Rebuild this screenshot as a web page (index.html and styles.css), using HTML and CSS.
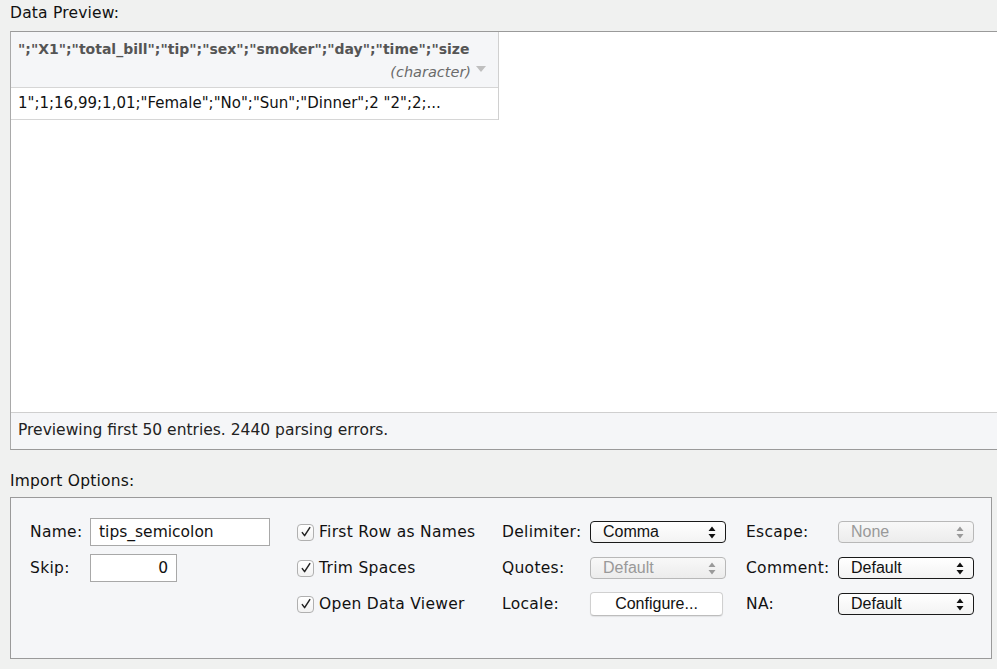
FILE: index.html
```html
<!DOCTYPE html>
<html>
<head>
<meta charset="utf-8">
<link rel="stylesheet" href="styles.css">
</head>
<body>
<div class="page">
  <div class="section-title top">Data Preview:</div>
  <div class="preview">
    <div class="grid-area">
      <div class="table">
        <div class="thead">
          <div class="col-name">";"X1";"total_bill";"tip";"sex";"smoker";"day";"time";"size</div>
          <div class="col-type"><span>(character)</span><span class="caret"></span></div>
        </div>
        <div class="trow">1";1;16,99;1,01;"Female";"No";"Sun";"Dinner";2 "2";2;...</div>
      </div>
    </div>
    <div class="status">Previewing first 50 entries. 2440 parsing errors.</div>
  </div>

  <div class="section-title">Import Options:</div>
  <div class="options">
    <div class="opt-grid">
      <label class="lbl">Name:</label>
      <div class="cell"><div class="textbox name">tips_semicolon</div></div>
      <div class="cell"><span class="check"><svg width="12" height="12" viewBox="0 0 12 12"><path d="M2.3 6.6 L4.6 9.6 L9.8 1.6" fill="none" stroke="#222" stroke-width="1.5" stroke-linecap="round" stroke-linejoin="round"/></svg></span><span class="chk-lbl">First Row as Names</span></div>
      <label class="lbl">Delimiter:</label>
      <div class="cell"><div class="select">Comma<svg class="arrows" width="8" height="13" viewBox="0 0 8 13"><path d="M4 0.5 L7.5 5 L0.5 5 Z M4 12.5 L7.5 8 L0.5 8 Z" fill="#111"/></svg></div></div>
      <label class="lbl">Escape:</label>
      <div class="cell"><div class="select disabled">None<svg class="arrows" width="8" height="13" viewBox="0 0 8 13"><path d="M4 0.5 L7.5 5 L0.5 5 Z M4 12.5 L7.5 8 L0.5 8 Z" fill="#9a9a9a"/></svg></div></div>

      <label class="lbl">Skip:</label>
      <div class="cell"><div class="textbox skip">0</div></div>
      <div class="cell"><span class="check"><svg width="12" height="12" viewBox="0 0 12 12"><path d="M2.3 6.6 L4.6 9.6 L9.8 1.6" fill="none" stroke="#222" stroke-width="1.5" stroke-linecap="round" stroke-linejoin="round"/></svg></span><span class="chk-lbl">Trim Spaces</span></div>
      <label class="lbl">Quotes:</label>
      <div class="cell"><div class="select disabled">Default<svg class="arrows" width="8" height="13" viewBox="0 0 8 13"><path d="M4 0.5 L7.5 5 L0.5 5 Z M4 12.5 L7.5 8 L0.5 8 Z" fill="#9a9a9a"/></svg></div></div>
      <label class="lbl">Comment:</label>
      <div class="cell"><div class="select">Default<svg class="arrows" width="8" height="13" viewBox="0 0 8 13"><path d="M4 0.5 L7.5 5 L0.5 5 Z M4 12.5 L7.5 8 L0.5 8 Z" fill="#111"/></svg></div></div>

      <div class="lbl"></div>
      <div class="cell"></div>
      <div class="cell"><span class="check"><svg width="12" height="12" viewBox="0 0 12 12"><path d="M2.3 6.6 L4.6 9.6 L9.8 1.6" fill="none" stroke="#222" stroke-width="1.5" stroke-linecap="round" stroke-linejoin="round"/></svg></span><span class="chk-lbl">Open Data Viewer</span></div>
      <label class="lbl">Locale:</label>
      <div class="cell"><div class="button">Configure...</div></div>
      <label class="lbl">NA:</label>
      <div class="cell"><div class="select">Default<svg class="arrows" width="8" height="13" viewBox="0 0 8 13"><path d="M4 0.5 L7.5 5 L0.5 5 Z M4 12.5 L7.5 8 L0.5 8 Z" fill="#111"/></svg></div></div>
    </div>
  </div>
</div>
</body>
</html>
```

FILE: styles.css
```css
html, body {
  margin: 0;
  padding: 0;
  background: #f0f1f0;
  width: 997px;
  height: 669px;
  overflow: hidden;
}
.page {
  font-family: "DejaVu Sans", "Noto Sans", sans-serif;
  font-size: 15px;
  color: #111;
}
.section-title {
  height: 31px;
  line-height: 31px;
  padding-left: 10px;
  font-size: 15.5px;
  letter-spacing: 0.2px;
  color: #111;
}
.section-title.top {
  height: 31px;
  line-height: 26px;
}
.preview {
  margin-left: 10px;
  width: 1000px;
  height: 417px;
  border-top: 1px solid #9a9a9a;
  border-left: 1px solid #a9a9a9;
  border-bottom: 1px solid #9a9a9a;
  background: #ffffff;
  display: flex;
  flex-direction: column;
}
.grid-area {
  flex: 1;
}
.table {
  width: 487px;
  border-right: 1px solid #d0d0d0;
}
.thead {
  background: #f5f6f8;
  border-bottom: 1px solid #d6d6d6;
  padding: 0 0 0 7px;
  box-sizing: border-box;
  height: 56px;
}
.col-name {
  font-weight: bold;
  color: #555;
  font-size: 14px;
  padding-top: 8px;
  line-height: 18px;
  white-space: nowrap;
}
.col-type {
  display: flex;
  justify-content: flex-end;
  align-items: center;
  padding-right: 12px;
  margin-top: 5px;
  font-style: italic;
  color: #6b6b6b;
  font-size: 14.5px;
  line-height: 18px;
}
.caret {
  width: 0;
  height: 0;
  border-left: 5px solid transparent;
  border-right: 5px solid transparent;
  border-top: 6px solid #bfbfbf;
  margin-left: 5px;
  margin-top: -6px;
}
.trow {
  height: 31px;
  line-height: 31px;
  border-bottom: 1px solid #d6d6d6;
  padding-left: 7px;
  font-size: 15px;
  color: #111;
  white-space: nowrap;
}
.status {
  height: 36px;
  line-height: 34px;
  border-top: 1px solid #cfcfcf;
  background: #f5f6f8;
  padding-left: 7px;
  font-size: 15.5px;
  color: #222;
}
.preview + .section-title {
  height: 47px;
  line-height: 62px;
}
.options {
  margin-left: 10px;
  width: 980px;
  height: 160px;
  border: 1px solid #9a9a9a;
  background: #f5f6f8;
}
.opt-grid {
  display: grid;
  grid-template-columns: 60px 207px 205px 88px 156px 92px 137px;
  grid-template-rows: 36px 36px 36px;
  padding: 16px 0 0 19px;
}
.lbl {
  display: flex;
  align-items: center;
  font-size: 15.5px;
  letter-spacing: 0.3px;
  color: #111;
  white-space: nowrap;
}
.cell {
  display: flex;
  align-items: center;
}
.textbox {
  height: 26px;
  border: 1px solid #a8a8a8;
  background: #fff;
  line-height: 26px;
  padding: 0 8px;
  font-size: 15.5px;
  color: #111;
}
.textbox.name {
  width: 162px;
}
.textbox.skip {
  width: 69px;
  text-align: right;
}
.check {
  width: 17px;
  height: 17px;
  border: 1px solid #b0b0b0;
  border-radius: 4px;
  background: linear-gradient(#ffffff, #f2f2f2);
  display: inline-flex;
  align-items: center;
  justify-content: center;
  margin-right: 5px;
  box-sizing: border-box;
}
.chk-lbl {
  font-size: 15.5px;
  letter-spacing: 0.3px;
  color: #111;
  white-space: nowrap;
}
.select {
  position: relative;
  width: 136px;
  height: 22px;
  box-sizing: border-box;
  border: 1px solid #1a1a1a;
  border-radius: 4px;
  background: linear-gradient(#ffffff, #f3f3f3);
  font-family: "Liberation Sans", Arial, sans-serif;
  font-size: 16px;
  line-height: 20px;
  padding-left: 12px;
  color: #111;
}
.select.disabled {
  border-color: #b8b8b8;
  color: #999;
  background: linear-gradient(#f8f8f8, #ececec);
}
.arrows {
  position: absolute;
  right: 9px;
  top: 4px;
}
.button {
  width: 133px;
  height: 24px;
  box-sizing: border-box;
  border: 1px solid #d0d0d0;
  border-bottom-color: #bdbdbd;
  border-radius: 4px;
  background: #ffffff;
  box-shadow: 0 1px 1px rgba(0,0,0,0.08);
  font-family: "Liberation Sans", Arial, sans-serif;
  font-size: 16px;
  line-height: 21px;
  text-align: center;
  color: #111;
}
```
